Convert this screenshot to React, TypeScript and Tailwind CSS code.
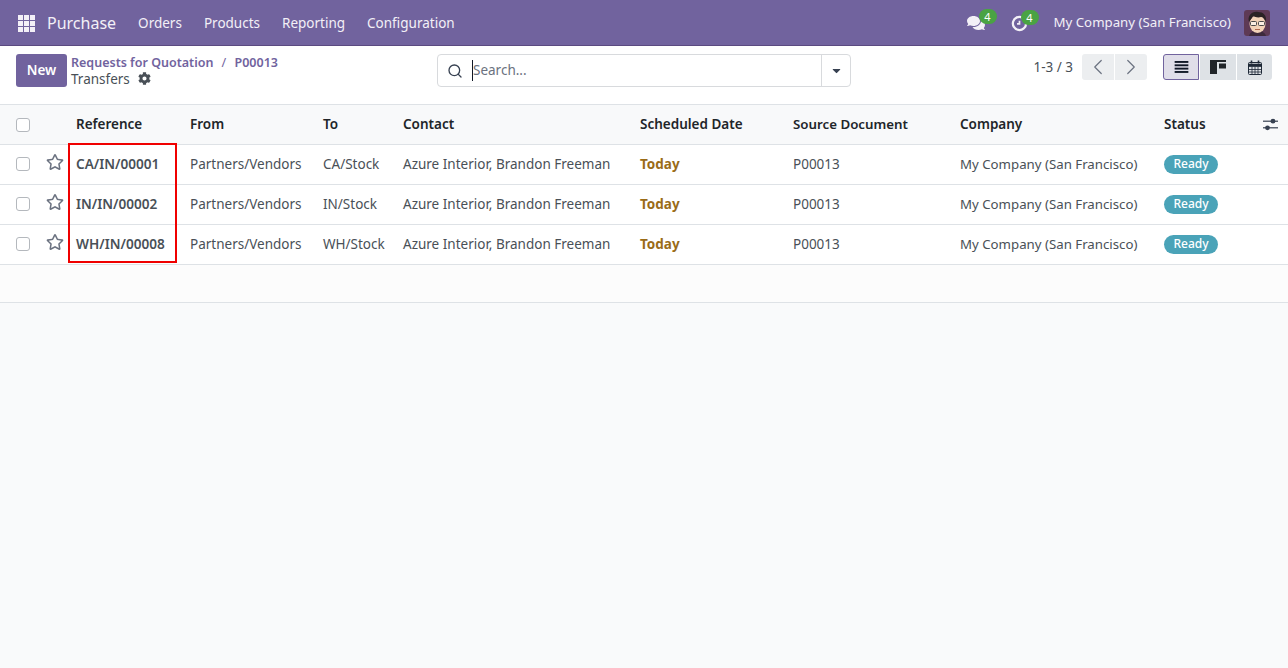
import { FaCog, FaComments, FaRegStar, FaCaretDown } from "react-icons/fa";
import { ChevronLeft, ChevronRight, Search } from "lucide-react";

const rows = [
  { ref: "CA/IN/00001", to: "CA/Stock" },
  { ref: "IN/IN/00002", to: "IN/Stock" },
  { ref: "WH/IN/00008", to: "WH/Stock" },
];

const columns = "grid grid-cols-[30px_30px_114px_133px_80px_237px_153px_167px_204px_1fr] items-center pl-4";

function Badge({ left }: { left: string }) {
  return (
    <span className={`absolute -top-[5px] ${left} flex h-[15px] w-[18px] items-center justify-center rounded-full bg-[#4aa343] text-[11px] leading-none text-white`}>
      4
    </span>
  );
}

function ActivityIcon() {
  return (
    <svg viewBox="0 0 18 18" className="h-[17px] w-[17px]" fill="none" stroke="#f3f0f7">
      <path d="M12 2.6A7 7 0 1 0 16 9" strokeWidth="2.4" />
      <path d="M9 6v3.4H6.4" strokeWidth="1.8" />
    </svg>
  );
}

function Avatar() {
  return (
    <svg viewBox="0 0 26 26" className="h-[26px] w-[26px] rounded-[3px]">
      <rect width="26" height="26" fill="#5e3a55" />
      <path d="M5 26c1-4 4-5 8-5s8 1 9 5z" fill="#3d2a3c" />
      <ellipse cx="13.5" cy="14" rx="8" ry="9" fill="#f3d3b8" />
      <path d="M5 12C3 6 8 1 14 2c5 0 9 3 8 10-1-3-3-5-5-5-3 1-6 0-8-1-1 2-2 3-4 6z" fill="#2b2325" />
      <rect x="6.5" y="11.5" width="6" height="4" rx="1" fill="#fbeee2" stroke="#4a4a4a" />
      <rect x="14.5" y="11.5" width="6" height="4" rx="1" fill="#fbeee2" stroke="#4a4a4a" />
      <path d="M11 19.5h5" stroke="#b0694f" strokeWidth="1" />
    </svg>
  );
}

function ListIcon() {
  return (
    <svg viewBox="0 0 16 14" className="h-[12px] w-[15px]" fill="#111827">
      <rect y="0" width="16" height="2.2" />
      <rect y="3.9" width="16" height="2.2" />
      <rect y="7.8" width="16" height="2.2" />
      <rect y="11.7" width="16" height="2.2" />
    </svg>
  );
}

function KanbanIcon() {
  return (
    <svg viewBox="0 0 16 14" className="h-[14px] w-[16px]" fill="#212529">
      <rect width="16" height="2" />
      <rect y="2" width="7" height="12" />
      <rect x="9" y="3.5" width="7" height="5" />
    </svg>
  );
}

function CalendarIcon() {
  return (
    <svg viewBox="0 0 14 15" className="h-[15px] w-[14px]" fill="none" stroke="#1f2937" strokeWidth="1">
      <rect x="0.5" y="2.5" width="13" height="12" rx="1" />
      <path d="M0.5 6.5h13M0.5 9.5h13M0.5 12h13M4 6.5v8M7 6.5v8M10 6.5v8" strokeWidth="0.8" />
      <path d="M0.5 5h13" strokeWidth="2.5" />
      <path d="M3.5 0.5v3M10.5 0.5v3" strokeWidth="1.6" />
    </svg>
  );
}

function SlidersIcon() {
  return (
    <svg viewBox="0 0 15 13" className="h-[13px] w-[15px]" fill="#374151">
      <rect y="2.6" width="15" height="1.2" />
      <rect y="9.2" width="15" height="1.2" />
      <circle cx="10" cy="3.2" r="2.4" />
      <circle cx="4.5" cy="9.8" r="2.4" />
    </svg>
  );
}

function Checkbox({ className }: { className?: string }) {
  return <span className={`block h-[14px] w-[14px] rounded-[3px] border border-[#b4b8bd] bg-white ${className ?? ""}`} />;
}

export default function App() {
  return (
    <div className="flex min-h-[668px] flex-col bg-[#f9fafb] font-['Noto_Sans',sans-serif] text-[13.5px] text-[#495057]">
      <header className="flex h-[46px] items-center justify-between border-b border-[#5b4a80] bg-[#71639e] pl-[18px] pr-[18px] pt-[1px] text-[#f3f0f7]">
        <div className="flex items-center">
          <div className="grid h-[17px] w-[17px] grid-cols-3 gap-[1px]">
            {Array.from({ length: 9 }).map((_, i) => (
              <span key={i} className="bg-[#f3f0f7]" />
            ))}
          </div>
          <span className="ml-[12px] text-[16px]">Purchase</span>
          <nav className="ml-[22px] flex gap-[22px] text-[13.5px]">
            <span>Orders</span>
            <span>Products</span>
            <span>Reporting</span>
            <span>Configuration</span>
          </nav>
        </div>
        <div className="flex items-center">
          <span className="relative mr-[26px] block">
            <FaComments className="h-[18px] w-[18px] text-[#f3f0f7]" />
            <Badge left="left-[12px]" />
          </span>
          <span className="relative mr-[26px] block">
            <ActivityIcon />
            <Badge left="left-[10px]" />
          </span>
          <span className="mr-[13px] text-[13.25px]">My Company (San Francisco)</span>
          <Avatar />
        </div>
      </header>

      <section className="grid h-[59px] grid-cols-[421px_414px_1fr] items-start border-b border-[#dee2e6] bg-white pl-4 pr-4 pt-[8px]">
        <div className="flex items-center">
          <button className="h-[33px] w-[51px] rounded-[3px] bg-[#71639e] text-[13.5px] font-semibold text-white">New</button>
          <div className="ml-[4px] leading-[16px]">
            <div className="text-[12.5px] font-semibold text-[#71639e]">
              Requests for Quotation <span className="mx-[5px] font-normal">/</span> P00013
            </div>
            <div className="flex items-center gap-[8px] text-[#495057]">
              Transfers <FaCog className="h-[13px] w-[13px]" />
            </div>
          </div>
        </div>
        <div className="flex h-[33px] items-center rounded-[4px] border border-[#d8dadd] bg-white">
          <Search className="ml-[9px] h-[16px] w-[16px] text-[#374151]" strokeWidth={2} />
          <span className="ml-[9px] flex-1 border-l border-[#111827] text-[#6b7280]">Search...</span>
          <span className="flex h-full w-[29px] items-center justify-center border-l border-[#d8dadd]">
            <FaCaretDown className="h-[13px] w-[13px] text-[#374151]" />
          </span>
        </div>
        <div className="flex items-center justify-end">
          <span className="mr-[9px]">1-3 / 3</span>
          <div className="flex h-[26px] gap-[1px]">
            <span className="flex w-[32px] items-center justify-center rounded-l-[3px] bg-[#eceef0]">
              <ChevronLeft className="h-[26px] w-[26px] text-[#6b7280]" strokeWidth={1.1} />
            </span>
            <span className="flex w-[32px] items-center justify-center rounded-r-[3px] bg-[#eceef0]">
              <ChevronRight className="h-[26px] w-[26px] text-[#6b7280]" strokeWidth={1.1} />
            </span>
          </div>
          <div className="ml-[16px] flex h-[26px] gap-[1px]">
            <span className="flex w-[36px] items-center justify-center rounded-l-[3px] border border-[#71639e] bg-[#e0dee9]">
              <ListIcon />
            </span>
            <span className="flex w-[36px] items-center justify-center bg-[#dee2e6]">
              <KanbanIcon />
            </span>
            <span className="flex w-[35px] items-center justify-center rounded-r-[3px] bg-[#dee2e6]">
              <CalendarIcon />
            </span>
          </div>
        </div>
      </section>

      <div className="relative">
        <div className={`${columns} h-[40px] border-b border-[#dee2e6] bg-[#f8f9fa] font-semibold text-[#212529]`}>
          <Checkbox />
          <span />
          <span>Reference</span>
          <span>From</span>
          <span>To</span>
          <span>Contact</span>
          <span>Scheduled Date</span>
          <span className="text-[13.3px]">Source Document</span>
          <span>Company</span>
          <div className="flex items-center justify-between pr-[10px]">
            <span>Status</span>
            <SlidersIcon />
          </div>
        </div>
        {rows.map((r) => (
          <div key={r.ref} className={`${columns} h-[40px] border-b border-[#dee2e6] bg-white`}>
            <Checkbox className="mb-[2px]" />
            <FaRegStar className="mb-[5px] h-[18px] w-[18px] text-[#6b7280]" />
            <span className="text-[13.6px] font-semibold">{r.ref}</span>
            <span>Partners/Vendors</span>
            <span>{r.to}</span>
            <span>Azure Interior, Brandon Freeman</span>
            <span className="font-bold text-[#9a6b17]">Today</span>
            <span>P00013</span>
            <span className="text-[13.25px]">My Company (San Francisco)</span>
            <span className="mb-[1px] flex h-[19px] w-[54px] items-center justify-center rounded-full bg-[#4aa3b8] text-[12px] font-medium text-white">
              Ready
            </span>
          </div>
        ))}
        <div className="h-[38px] border-b border-[#dee2e6] bg-[#fcfcfc]" />
        <div className="absolute left-[68px] top-[38px] h-[120px] w-[109px] border-2 border-[#f00000]" />
      </div>
    </div>
  );
}
